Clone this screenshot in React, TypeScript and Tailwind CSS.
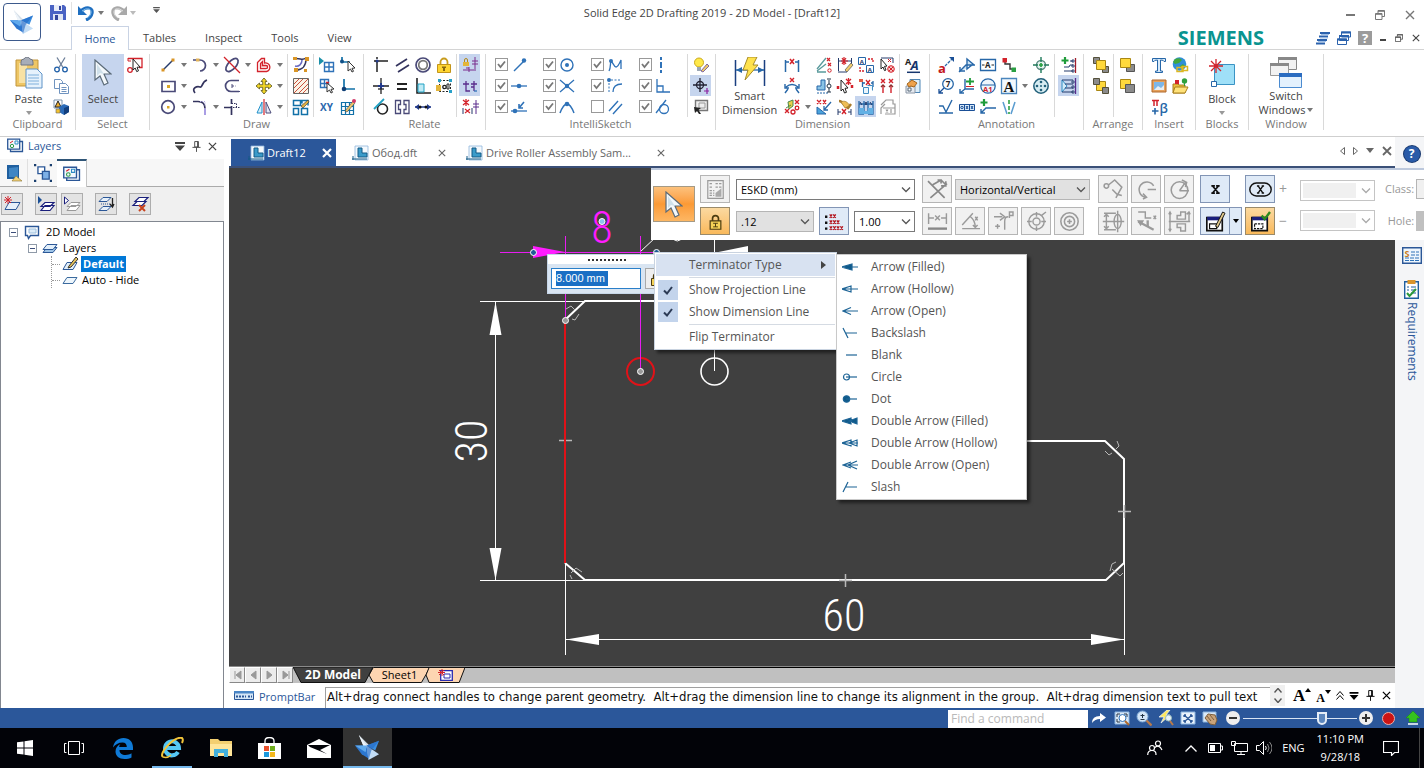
import type { ReactNode } from 'react'
import clsx from 'clsx'

const navy = '#243a6b'
const blue = '#2f72b8'
const red = '#d3222b'
const grey = '#9a9a9a'

const glyphs: Record<string, ReactNode> = {
  // clipboard / select
  cut: <g strokeWidth="1.3"><path d="M4 .5 10 10.5M12 .5 6 10.5" stroke="#6d7f99" /><circle cx="4" cy="12.5" r="2.3" stroke="#1f5fa8" /><circle cx="12" cy="12.5" r="2.3" stroke="#1f5fa8" /></g>,
  copy: <g fill="#fff" stroke="#6f93bf"><path d="M1.5 1.5h6l2 2v7h-8z" /><path d="M6.5 5.5h6l3 3v7h-9z" /><path d="M8.5 9.5h5M8.5 11.5h5M8.5 13.5h5" /></g>,
  format: <g><path d="M1 1h8v8H1z" fill="#fff" stroke="#7b93ad" /><path d="M2 8 5 2l3 6z" fill="#f0b030" stroke="#222" /><path d="m6 8 5-3 5 2v6l-5 3-5-3z" fill="#2b6bb8" /><path d="m11 9 5-2v6l-5 3z" fill="#123f7d" /><path d="M3 10h4v4H3z" fill="#f2c230" stroke="#666" strokeWidth=".6" /></g>,
  selectTools: <g><path d="M1 1.5h14v9h-3" stroke={red} strokeWidth="1.3" /><path d="M1 1v3h3" stroke={red} /><circle cx="3" cy="13" r="2.3" stroke={red} strokeWidth="1.3" /><path d="m6 2 7 8-3 .3 1.5 3.5-1.8.8L8.2 11 6 13z" fill="#fff" stroke="#222" /></g>,
  // draw
  line: <g><path d="M3 13 13 3" stroke={navy} strokeWidth="1.5" /><path d="M1.5 11.5h3v3h-3zM11.5 1.5h3v3h-3z" fill="#d99526" /></g>,
  arc: <g><path d="M1 3h7a5.5 5.5 0 0 1 0 11" stroke="#4a4a78" strokeWidth="1.7" /><path d="M4 1.5h3.5v3H4z" fill="#e2b45a" /></g>,
  ellipseTrim: <g><ellipse cx="8" cy="8" rx="8" ry="4" transform="rotate(-48 8 8)" stroke="#4a4a78" strokeWidth="1.7" /><path d="M0 0 16 16" stroke={red} strokeWidth="1.3" /></g>,
  offset: <g stroke={red} strokeWidth="1.3"><path d="M1.5 14.5v-9l4-4h3V6a4.3 4.3 0 1 1 2 8.5z" /><path d="M4.5 11.7V6.5l2-2v4H10a1.6 1.6 0 0 1 0 3.2z" fill="#f8d7d7" /></g>,
  rect: <g><path d="M2 3.5h13v10H2z" stroke="#4a4a78" strokeWidth="1.7" /><path d="M7 7h3v3H7z" fill="#d9a526" /></g>,
  curve: <path d="M3 15c-4-5 2-7 5-6s1-5 7-7" stroke="#34345e" strokeWidth="1.7" />,
  slot: <g stroke="#4a4a78" strokeWidth="1.7"><path d="M15 2.5H7a5.5 5.5 0 0 0 0 11h8" /><path d="M8 8h4" strokeDasharray="2 1.5" strokeWidth="1" /><path d="M12 13.5h4M8 6v4" strokeWidth="1" /></g>,
  move: <path d="m8 0 3 3.5H9.3v3.2h3.2V5L16 8l-3.5 3V9.3H9.3v3.2H11L8 16l-3-3.5h1.7V9.3H3.5V11L0 8l3.5-3v1.7h3.2V3.5H5z" fill="#f4d726" stroke="#55511c" strokeWidth=".8" />,
  circle: <g><circle cx="8" cy="8" r="6.3" stroke="#4a4a78" strokeWidth="1.7" /><path d="M7 7h2.5v2.5H7z" fill="#d9a526" /></g>,
  fillet: <g><path d="M1 2.5h5" stroke="#34345e" strokeWidth="1.5" /><path d="M6 2.5q7 0 7 7" stroke="#34345e" strokeWidth="1.7" /><path d="M13 9.5V16" stroke="#9a8ce0" strokeWidth="1.7" /><path d="M8 2.5h5v5" stroke="#b6afe6" strokeDasharray="1 1" /></g>,
  extend: <g stroke="#34345e" strokeWidth="1.7"><path d="M7.5 0v5M7.5 7v9M0 8.5h7" /><path d="M9 8.5h7M7.5 4.5h5v4" strokeWidth="1" strokeDasharray="1.5 1" /></g>,
  mirror: <g><path d="M1 14 6 3v11z" stroke="#1f8fc9" fill="#d8effa" /><path d="M15 14 10 3v11z" stroke="#4a4a78" fill="#e8e8f6" /><path d="M8 0v16" stroke={red} strokeWidth="1.2" /></g>,
  sketch: <g stroke="#34345e" strokeWidth="1.5"><path d="M2 1.5C8 1 9 4 13 1M3 13c6 0 10-4 10-11" /><path d="M2 9c4 1 7-2 7-6" stroke="#6a6ac0" /><path d="M0 0h4v3H0zM12 0h4v4h-4zM1 11h4v4H1zM11 12h3v3h-3z" fill="#d99526" stroke="none" /></g>,
  hatch: <g><path d="M.5.5h15v15H.5z" fill="#fbf3e6" stroke="#666" /><path d="M1 6 6 1M1 10l9-9M1 15 15 1M6 15l9-9M10 15l5-5" stroke="#c9503c" /></g>,
  fillTool: <g><path d="M.5 1.5h7v5h-7zM.5 9.5h5v6h-5zM8.5 9.5h6v6h-6zM9 4.5v-3h6v5" stroke="#1271a8" strokeWidth="1.5" /><path d="m8 7 7-6 1 2-6 6z" fill="#e0b040" stroke="#333" strokeWidth=".6" /></g>,
  gridSnap: <g><path d="m0 0 5 4-5 4z" fill="#1a8fa8" /><path d="M5.5 5.5h9v9h-9zM10 5.5v9M5.5 10h9" stroke={blue} strokeWidth="1.4" /></g>,
  gridPick: <g><path d="M1.5 1.5h8v8h-8zM5.5 1.5v8M1.5 5.5h8" stroke={blue} strokeWidth="1.4" /><path d="m8 5 7 6-3 .3 1.5 3-1.5.7-1.5-3L8 14z" fill="#fff" stroke="#333" /><path d="M7 4.5h3" stroke={red} strokeWidth="1.5" /></g>,
  xy: <text x="1" y="12" fontSize="10" fontWeight="700" fill="#2b67ad">XY</text>,
  nodePick: <g><path d="M2 0v5h8" stroke="#1271a8" strokeWidth="1.7" /><circle cx="2" cy="4.5" r="2" fill="#0f4f86" /><path d="m8 4 7 7-3 .3 1.5 3-1.5.7-1.5-3L8 14z" fill="#fff" stroke="#333" /></g>,
  nodeCorner: <g><path d="M4 1v10h11" stroke="#1271a8" strokeWidth="1.7" /><circle cx="4" cy="11" r="2.3" fill="#0f3f76" /></g>,
  gridEdit: <g><path d="M1.5 3.5h12v12h-12zM5.5 3.5v12M9.5 3.5v12M1.5 7.5h12M1.5 11.5h12" stroke="#1271a8" strokeWidth="1.2" /><path d="m5 12 8-10 2 2-8 9z" fill="#eec56b" stroke="#444" strokeWidth=".6" /><circle cx="14" cy="2" r="2" fill="#d33a6a" /></g>,
  // relate
  connect: <g stroke="#222" strokeWidth="1.5"><path d="M4 15V4h11" /><circle cx="4" cy="4" r="1.6" fill="#223a8b" stroke="none" /><path d="M1 4h2M4 0v2" /></g>,
  parallel: <path d="M2 9 13 2M4 15l11-7" stroke="#34345e" strokeWidth="1.7" />,
  concentric: <g stroke="#4a4a78" strokeWidth="1.7"><circle cx="8" cy="8" r="7" /><circle cx="8" cy="8" r="4.3" stroke="#777" /></g>,
  lock: <g><path d="M4.5 8V5a3.5 3.5 0 0 1 7 0v3" stroke="#c79b1c" strokeWidth="1.8" /><path d="M1.5 7.5h13v8h-13z" fill="#ffd530" stroke="#c2941a" /><path d="M6 9.5h4V11H9v3H7v-3H6z" fill="#8a6a10" /></g>,
  hv: <g stroke="#222" strokeWidth="1.3"><path d="M8 0v5M8 11v5M0 8h5M11 8h5" /><path d="M8 5v6M5 8h6" stroke="#223a8b" strokeWidth="2" /><path d="M5 11h6" /></g>,
  equal: <path d="M3 6h10M3 11h10" stroke="#222" strokeWidth="2.2" />,
  perp: <g><path d="M2 0v15h14" stroke="#222" strokeWidth="1.6" /><path d="M3 6h6v8H3z" fill="#bfeaf5" stroke="#22a2c4" /></g>,
  rigid: <g><path d="M3.5 2.5h11v11h-11z" stroke="#222" strokeDasharray="2 1.5" /><path d="M0 7h5v6H0z" fill="#e3b53a" /><circle cx="8.5" cy="9" r="1.7" stroke="#222" strokeWidth="1.3" /><path d="M11 6h2v5h-2z" stroke="#222" /><path d="M2 1h3v3H2zM13 1h3v3h-3zM13 12h3v3h-3z" fill="#28a0c8" /></g>,
  tangent: <g><circle cx="9.5" cy="10" r="5" stroke="#222" strokeWidth="1.6" /><path d="M1 10 11 0" stroke="#22a2c4" strokeWidth="1.8" /></g>,
  symmetric: <path d="M1.5 1.5h5v4h-2v5h2v4h-5zM15 1.5h-5v4h2v5h-2v4h5z" stroke="#4a4a78" strokeWidth="1.3" />,
  collinear: <g><path d="M0 8h16" stroke="#223a8b" strokeWidth="1.5" /><path d="M0 8 4 5v6zM16 8l-4-3v6z" fill="#223a8b" /><circle cx="5" cy="8" r="1.5" fill="#111" /><circle cx="11" cy="8" r="1.5" fill="#111" /></g>,
  maintain: <g><path d="M2.5 5V3a1.5 1.5 0 0 1 3 0v2" stroke="#b38a1c" /><path d="M1 5h6v4H1z" fill="#e3b53a" /><path d="M13 0v14M10 4h6M10 7h6M1 13h11M7 10v5M4 11h3" stroke="#7a2c8c" /></g>,
  handles: <g stroke="#5a2c8c" strokeWidth="1.3"><path d="M4 3v10h4M1 6h6M12 3v10M9 6h6M9 9h3" /><path d="M12 13h3" stroke="#2f72b8" /></g>,
  removeRel: <g><path d="M4 0v7M1 1l6 5M7 1 1 6" stroke={red} strokeWidth="1.3" /><path d="M14 1v14M11 5h6M11 8h6" stroke="#5a2c8c" /><path d="M1 9v6M10 9v6" stroke={navy} /><path d="m3 10 5 4M8 10l-5 4" stroke={red} strokeWidth="1.2" /></g>,
  // intellisketch
  endpoint: <g><path d="M3 14 13 4" stroke={blue} strokeWidth="1.5" /><circle cx="13" cy="3.5" r="2.2" fill={blue} /></g>,
  midpoint: <g><path d="M0 8h16" stroke={blue} strokeWidth="1.3" /><circle cx="8" cy="8" r="2.3" fill={blue} /></g>,
  pointOn: <g><path d="M0 12h16" stroke={blue} strokeWidth="1.3" /><circle cx="4" cy="12" r="2.3" fill={blue} /><path d="m8 9 5-6M8 5v4h4" stroke={blue} strokeWidth="1.6" /></g>,
  centre: <g><circle cx="8" cy="8" r="6" stroke={blue} strokeWidth="1.4" /><circle cx="8" cy="8" r="2" fill={blue} /></g>,
  intersect: <g><path d="M1 2 15 14M15 2 1 14" stroke={blue} strokeWidth="1.3" /><circle cx="8" cy="8" r="2.2" fill={blue} /></g>,
  silhouette: <g><path d="M1 14q7-18 14 0" stroke={blue} strokeWidth="1.5" /><circle cx="8" cy="5" r="2.3" fill={blue} /></g>,
  editPoint: <g><path d="M2 14c2-3 1-8 2-10 3 2 4 13 10-1v9" stroke={blue} strokeWidth="1.3" /><circle cx="4" cy="4" r="2" fill={blue} /></g>,
  extension: <g><path d="M6 14c0-5 3-8 9-8" stroke={blue} strokeWidth="1.3" /><path d="M2 14V2h12" stroke={blue} strokeDasharray="2 1.5" /><circle cx="2" cy="2" r="2" fill={blue} /></g>,
  parallelBlue: <path d="M2 12 11 2M6 15 15 5" stroke={blue} strokeWidth="1.4" />,
  vertical: <path d="M6 0v3M6 5v6M6 13v3" stroke={blue} strokeWidth="2" />,
  perpBlue: <path d="M2 1v13h13M2 8h6v6" stroke={blue} strokeWidth="1.3" />,
  tangentBlue: <g stroke={blue} strokeWidth="1.3"><circle cx="9" cy="10" r="4.5" /><path d="M1 14 11 1" /></g>,
  bulb: <g><circle cx="6" cy="5.5" r="4.5" fill="#ffe94a" stroke="#caa91c" /><path d="M4 10h4v4H4z" fill="#9aa6b5" /><path d="m8 14 6-7 2 2-6 6z" fill="#f0cb6b" stroke="#634a9c" strokeWidth=".8" /></g>,
  origin: <g><circle cx="7" cy="7" r="3.5" stroke="#223" strokeWidth="1.3" /><path d="M7 0v14M0 7h14" stroke="#223" strokeWidth="1.3" /><path d="M14 10v6M11 13h5" stroke="#8a22a0" strokeWidth="1.2" /></g>,
  boxPick: <g><path d="M2.5 1.5h12v10h-12z" fill="#eee" stroke="#777" strokeWidth="1.4" /><path d="M6 4h6v5H6z" stroke="#999" /><path d="m1 8 7 1-2.5 2L8 15H6l-2-3-2 2z" fill="#222" /></g>,
  // dimension
  dist: <g><path d="M1.5 3v12M14.5 3v12M2 5h3M11 5h3" stroke="#2767a8" strokeWidth="1.5" /><path d="m6 2 4 5M10 2 6 7" stroke={red} strokeWidth="1.5" /></g>,
  angle: <g><path d="M2 9q6-5 12 0M1 15l3-4M15 15l-3-4M1 6v4h4M15 6v4h-4" stroke="#2767a8" strokeWidth="1.4" /><path d="m6 0 4 4M10 0 6 4" stroke={red} strokeWidth="1.4" /></g>,
  coordDim: <g><path d="m4 3 5-2v6l-4 3zM2 9l5-3" fill="#e9cf4a" stroke="#4d8a4a" /><path d="m11 1 4 4M15 1l-4 4M1 10l4 4M5 10l-4 4" stroke={red} strokeWidth="1.3" /><circle cx="13" cy="9" r="1.8" stroke={red} strokeWidth="1.3" /><circle cx="9" cy="13" r="2" stroke={red} strokeWidth="1.3" /></g>,
  angCoord: <g><path d="M1 12 10 1M1 14l9-7M1 15h9" stroke="#5a9a9c" strokeWidth="1.3" /><path d="m11 1 3 3M14 1l-3 3M12 6l3 3M15 6l-3 3" stroke={red} strokeWidth="1.2" /><circle cx="13.5" cy="13.5" r="1.7" stroke={red} /></g>,
  symDia: <g><path d="M1 12V8h4V2h4v10z" fill="#8bc4e6" stroke="#2767a8" /><path d="M1 15h11" stroke="#2767a8" strokeDasharray="2 1" /><path d="M11 1h4M11 14h4M13 2v12" stroke="#234" /><circle cx="13" cy="8" r="2" fill="#fff" stroke="#234" /></g>,
  chamfer: <g><path d="M1 8v7h9z" fill="#4aa3dc" stroke="#2767a8" /><path d="m1 1 4 4M5 1 1 5M7 1l3 4M10 1 7 5" stroke={red} strokeWidth="1.3" /><path d="M15 3 8 11M8 7v4h4" stroke="#2767a8" strokeWidth="1.3" /></g>,
  dimEdit: <g><path d="M1.5 1v13M14.5 1v7M2 4h12" stroke={navy} /><path d="M1 15h9" stroke={navy} /><path d="M5 1 9 7M9 1 5 7M7 0v8M4 4h7" stroke={red} strokeWidth="1.2" /><path d="m8 13 6-7 2 2-6 7z" fill="#f0cb6b" stroke="#555" strokeWidth=".7" /></g>,
  dimPick: <g><path d="M1 8v3M15 7v3" stroke={red} strokeWidth="2.5" /><path d="m4 2 7 8-3 .3 1.5 4-2 .7L6 11l-2 2z" fill="#fff" stroke="#222" /><path d="m9 1 5 5M14 1 9 6M11.5 0v7" stroke={red} strokeWidth="1.3" /></g>,
  dimPaint: <g><path d="M2 2c4 0 6 6 9 7l3-4" stroke="#a97b2c" strokeWidth="2.5" /><path d="M4 3c3-2 8 0 8 4L8 9z" fill="#eebd55" stroke="#9b7425" strokeWidth=".6" /><path d="m5 10 4 5M9 10l-4 5" stroke={red} strokeWidth="1.4" /><path d="M1 10v6M14 10v6M1 13h3M11 13h3" stroke={navy} /></g>,
  attach: <g><path d="M.5.5h7v7h-7zM8.5 8.5h7v7h-7z" fill="#fff" stroke="#2767a8" /><path d="M10 2h5v4M2 10v4h4" stroke={red} strokeDasharray="2 1" strokeWidth="1.3" /><text x="1.8" y="6.5" fontSize="6" fontWeight="700" fill={navy}>A</text><text x="9.8" y="14.5" fontSize="6" fontWeight="700" fill={navy}>A</text></g>,
  copyDim: <g><path d="M1 1h4v3H1z" fill="#e05c44" /><path d="M4.5 4v5M15 3v6M5 5h2M13 5h2" stroke="#2767a8" strokeWidth="1.3" /><path d="m8 2 4 5M12 2 8 7" stroke={red} strokeWidth="1.3" /><path d="M5.5 9.5h5v6h-5zM9.5 7.5h5v5" stroke="#3f8cc4" fill="#eaf5fc" /></g>,
  arrange: <g><path d="M1 2v13h5M15 2v13h-5M6 2v13M10 2v13M1 5h14" stroke="#2767a8" strokeWidth="1.3" /><path d="M1 9h5v6H1zM10 9h5v6h-5zM6 12h4v3H6z" fill="#62b0e4" /><path d="m7 3 2 3M9 3 7 6M2 3l2 3M12 3l2 3" stroke={navy} /></g>,
  trackDim: <g><path d="M2 1h12v5" stroke={navy} /><path d="m2 2 6 7-2.5.3L7 13l-1.5.6L4 10l-2 2z" fill="#fff" stroke="#222" /><circle cx="12" cy="12" r="3.3" stroke={red} fill="#f6c8c8" /><path d="m10 10 4 4M14 10l-4 4M9 2l3 3M12 2 9 5" stroke={red} /></g>,
  alignDim: <g stroke={red} strokeWidth="1.4"><path d="m2 1 4 4M6 1 2 5M10 1l4 4M14 1l-4 4M4 7v8M12 7v8" /><path d="m2 9 2-2 2 2M10 9l2-2 2 2" stroke="#8a3030" /></g>,
  retrieve: <g stroke={grey} strokeWidth="1.2"><path d="M2 6 7 1h7v4h2v4M6 5 2 9v6M4 9h12v6H6M7 10.5l2 3M9 10.5l-2 3M12 10v4" /></g>,
  styles: <g><text x="0" y="8" fontSize="9" fontWeight="700" fill="#222">A</text><text x="5.5" y="13" fontSize="13" fontWeight="700" fontStyle="italic" fill="#16366e">A</text><path d="M2 15.3h13" stroke="#16366e" strokeWidth="1.5" /></g>,
  props: <g><path d="M5 1.5h10v13H5z" fill="#dceefa" stroke="#4f86b5" /><path d="M1 8h9v7H1z" fill="#e5e9f0" stroke="#8a96a5" /><path d="m2 6 5-4 5 3-3 4-3-1-2 1z" fill="#eea24c" stroke="#a4651c" /><path d="M3 10h3v3H3z" fill="#fff" stroke="#567" /></g>,
  // annotation
  leader: <g><path d="M7 9 15 1" stroke="#2767a8" strokeWidth="1.3" strokeDasharray="3 1" /><path d="M11 0h5v5z" fill="#1a4f96" /><text x="0" y="15.5" fontSize="13" fontWeight="700" fill="#c4161c">a</text></g>,
  datumTarget: <g stroke="#2767a8" strokeWidth="1.4"><path d="M0 15 7 8h9M8 2v10l6-5z" fill="#cfe5f6" /><path d="M1 10v4h5" /></g>,
  datum: <g><path d="M.5 2.5h15v11H.5z" stroke="#2767a8" strokeWidth="1.3" /><text x="5" y="11" fontSize="8" fontWeight="700" fill="#222">A</text><path d="M2 8h2.5M11.5 8H14" stroke="#222" /></g>,
  connector: <g><path d="M4 3v4h5v5h4" stroke="#333" strokeWidth="1.4" /><path d="M1.5 1H6v4.5H1.5z" fill={red} /><path d="M10.5 10.5H15V15h-4.5z" fill="#2aa043" /></g>,
  balloon: <g><circle cx="10" cy="6" r="5.3" stroke="#2767a8" strokeWidth="1.3" /><text x="7.8" y="9" fontSize="8" fontWeight="700" fill="#222">7</text><path d="M6 10 1 15M1 11v4h4" stroke="#1a4f96" strokeWidth="1.3" /></g>,
  surface: <g><path d="M6 1v10h9M6 11l-5 4M1 11v4h4" stroke="#2767a8" strokeWidth="1.4" /><path d="M11 0v7M7 3.5h8" stroke="#1f9c3a" strokeWidth="1.8" /><path d="M7 8.5h8" stroke={red} /></g>,
  a1: <g><circle cx="8" cy="8" r="7.2" stroke="#2767a8" strokeWidth="1.3" fill="#eef6fc" /><path d="M1 7h14" stroke="#2767a8" /><text x="3" y="14" fontSize="7.5" fontWeight="700" fill={red}>A1</text></g>,
  textA: <g><path d="M.5.5h15v15H.5z" stroke="#4b86bd" strokeWidth="1.3" fill="#f3f9fe" /><text x="2.5" y="13.5" fontSize="15" fontWeight="700" fill="#111" fontFamily="Liberation Serif, serif">A</text></g>,
  rough: <path d="M1 7h4l3 6 6-12M1 14h14" stroke="#2767a8" strokeWidth="1.4" />,
  fcf: <g><path d="M.5 5.5h15v6H.5zM5.5 5.5v6M10.5 5.5v6" stroke="#1a4f96" fill="#d7e8f7" /><circle cx="3" cy="8.5" r="1.2" stroke="#1a4f96" /><path d="m7 7 2 3M9 7l-2 3M12 7l2 3M14 7l-2 3" stroke="#1a4f96" /></g>,
  weld: <g><path d="M1 14 6 9h10M1 10v4h4" stroke="#2767a8" strokeWidth="1.4" /><path d="M4 0v7M.5 3.5h7" stroke="#1f9c3a" strokeWidth="2.2" /></g>,
  taper: <g strokeWidth="1.5"><path d="M2 3 6 15M14 3l-4 12" stroke="#5a9cd0" /><path d="M8 1v14" stroke="#1f9c3a" strokeDasharray="4 2" /></g>,
  centreMark: <g><circle cx="8" cy="8" r="4.5" stroke="#5b8a80" strokeWidth="1.4" fill="#e3f3ef" /><path d="M8 0v5M8 11v5M0 8h5M11 8h5" stroke="#1f7a5a" strokeWidth="1.4" /><path d="M8 6v4M6 8h4" stroke="#2aa043" strokeWidth="1.7" /></g>,
  boltCircle: <g><circle cx="8" cy="8" r="7.2" stroke="#22607a" strokeWidth="1.5" fill="#d6ecf2" /><circle cx="8" cy="4" r="1.3" fill="#22607a" /><circle cx="8" cy="12" r="1.3" fill="#22607a" /><circle cx="4" cy="8" r="1.3" fill="#22607a" /><circle cx="12" cy="8" r="1.3" fill="#22607a" /><circle cx="8" cy="8" r="1" fill="#22607a" /></g>,
  addNode: <g><path d="M4 0v7M.5 3.5h7" stroke="#1f9c3a" strokeWidth="2.2" /><path d="M14.5 1v15" stroke="#a01c2c" strokeWidth="1.3" /><path d="M3 10h5l1-2h3M3 14h9M9 4h3" stroke={navy} /><circle cx="12" cy="4" r="1.2" stroke={navy} /><circle cx="12" cy="9" r="1.2" stroke={navy} /><circle cx="12" cy="14" r="1.2" stroke={navy} /></g>,
  treeNode: <g><path d="M1 2v12l5-6z" stroke="#2f8cc4" fill="#d3ebf8" /><path d="M14.5 0v16" stroke="#5a2c8c" strokeWidth="1.3" /><path d="M1 2h11M4 6h8M4 10h8M1 14h11" stroke={navy} /><circle cx="12" cy="4" r="1.2" stroke={navy} /><circle cx="12" cy="9" r="1.2" stroke={navy} /><circle cx="12" cy="14" r="1.2" stroke={navy} /></g>,
  // arrange / insert
  toFront: <g stroke="#55503a"><path d="M.5.5h6v6h-6zM9.5 9.5h6v6h-6z" fill="#8b8b8b" /><path d="M3.5 3.5h9v9h-9z" fill="#ffd93c" stroke="#a98714" /></g>,
  toBack: <g stroke="#55503a"><path d="M3.5 3.5h9v9h-9z" fill="#ffd93c" stroke="#a98714" /><path d="M.5.5h6v6h-6zM9.5 9.5h6v6h-6z" fill="#8b8b8b" /></g>,
  forward: <g><path d="M7.5 7.5h8v7h-8z" fill="#8b8b8b" stroke="#555" /><path d="M1.5 1.5h10v9h-10z" fill="#ffd93c" stroke="#a98714" /></g>,
  backward: <g><path d="M1.5 1.5h10v9h-10z" fill="#ffd93c" stroke="#a98714" /><path d="M6.5 6.5h9v8h-9z" fill="#8b8b8b" stroke="#555" /></g>,
  textT: <path d="M1.5 4.5v-3h13v3H13Q13 3 9.5 3v11h2v1.5h-7V14h2V3Q3 3 3 4.5z" fill="#d7eafa" stroke="#2767a8" />,
  globe: <g><circle cx="7.5" cy="7" r="6.8" fill="#2f8fd8" /><path d="M3 2q5-2 7 1l-3 3-4 1-2-2zM8 9l3-2 2 2-3 4z" fill="#42a83c" /><path d="M5 10.5h6v4H5zM10 9.5h5.5v4H10z" fill="none" stroke="#dcb722" strokeWidth="1.5" /></g>,
  image: <g><path d="M1 2h14v12H1z" fill="#e6a15c" stroke="#b0682c" /><path d="M3 4h10v8H3z" fill="#7db6e8" /><path d="m3 12 4-4 3 2 3-3v5z" fill="#e9eef2" /></g>,
  folder: <g><path d="M1 6h5l1 1h6v8H1z" fill="#eebe3c" stroke="#a9801c" /><path d="M3 9h13l-3 6H1z" fill="#ffe27a" stroke="#a9801c" /><path d="M3 2h4v4H3z" fill={red} /><circle cx="12.5" cy="3" r="2.7" fill="#2fa03c" /><path d="M12.5 5v3" stroke="#2fa03c" /></g>,
  symbols: <g><path d="M1 1.5h7M3 2v5M6 2v5" stroke={red} strokeWidth="1.5" /><path d="M4 9v6.5M1 12h6.5" stroke="#2767a8" strokeWidth="1.6" /><text x="8.5" y="13.5" fontSize="13" fontWeight="600" fill="#2767a8">β</text></g>,
  // command bar
  styleGrid: <g stroke="#9a9a9a"><path d="M1.5.5h13v15h-13z" fill="#f2f2f2" /><path d="M3 3h3M8 3h5M3 6h3M8 6h5M3 9h4M3 11h4M3 13h4" strokeDasharray="2 1" /><path d="M8 14v-3l5-4v7z" fill="#aaa" stroke="none" /></g>,
  lockSmall: <g><path d="M5.5 8V5.5a2.5 2.5 0 0 1 5 0V8" stroke="#4a3b10" strokeWidth="1.4" /><path d="M3.5 7.5h9v7h-9z" fill="#f4d257" stroke="#4a3b10" /><path d="M8 9.5v3M6 9.5h4M6 12.5h4" stroke="#4a3b10" strokeWidth=".8" /></g>,
  decimals: <g><path d="M0 3h2v2H0zM0 8h2v2H0zM0 13h2v2H0z" fill="#111" /><path d="m4 2 2 3M6 2 4 5M7 2l2 3M9 2 7 5M4 7l2 3M6 7l-2 3M7 7l2 3M9 7l-2 3M10 7l2 3M12 7l-2 3M4 12l2 3M6 12l-2 3M7 12l2 3M9 12l-2 3M10 12l2 3M12 12l-2 3M13 12l2 3M15 12l-2 3" stroke="#b2121c" strokeWidth="1.1" /></g>,
  crossDim: <g stroke="#888" strokeWidth="1.4"><path d="M0 1 14 15M16 3 2 15M4 4l7-4M11 0l4 4M8 0h3v3M15 1v4h-4" /></g>,
  gDist: <g stroke={grey} strokeWidth="1.2"><path d="M.5 1v9M15.5 1v9M1 5h4M11 5h4M6 3l4 4M10 3 6 7" /><path d="M0 14h16" strokeWidth="2" stroke="#888" /></g>,
  gAngle: <g stroke={grey} strokeWidth="1.2"><path d="M1 14h15M1 11 10 1M8 4q4 3 4 9M10 11l2 2 2-2M12 4l2 3M14 4l-2 3" /></g>,
  gLeader: <g stroke={grey} strokeWidth="1.2"><path d="M0 4h7M9 15V8q0-4 3-4M5 1l4 3-4 3M1 12h4M3 10v4M13 5V0h3v3h-3" /></g>,
  gCircle: <g stroke={grey} strokeWidth="1.2"><circle cx="8" cy="8" r="6.5" /><circle cx="8" cy="8" r="3" /><path d="M8 0v4M8 12v4M0 8h4M12 8h4M12 3l4-3" /></g>,
  gTarget: <g stroke={grey} strokeWidth="1.3"><circle cx="8" cy="8" r="7.3" /><circle cx="8" cy="8" r="4.3" /><path d="M8 6v4M6 8h4" /></g>,
  gNode: <g stroke={grey} strokeWidth="1.3"><circle cx="2" cy="5" r="1.9" /><path d="m4 4 5-4 6 6-5 9M7 8l4 4 4 1" /></g>,
  gArc: <path d="M16 8H9M14 5a6.5 6.5 0 1 0-7 9.500M5 11.500l3 3-3 1.500" stroke={grey} strokeWidth="1.3" />,
  gArc2: <g stroke={grey} strokeWidth="1.3"><circle cx="8" cy="8.5" r="7" /><path d="M8 9h8M8 9l5-7M10 0l4 2-1 4" /></g>,
  gSym: <g stroke={grey} strokeWidth="1.2"><ellipse cx="11.5" cy="8" rx="3" ry="6" /><path d="M0 1h10M0 15h10M2 2v12M-1 8h18M11.5-1v18M0 4l2-2 2 2M0 12l2 2 2-2" /></g>,
  gJog: <g stroke={grey} strokeWidth="1.2"><path d="M1 0h6v5h5M14 3l2 3M16 3l-2 3" /><path d="m1 8 13 7" strokeWidth="1.8" /><path d="M0 7h6l-3 5z" fill="#999" stroke="none" /><path d="M9 7v5" strokeWidth="2" /></g>,
  gHalf: <g stroke={grey} strokeWidth="1.2"><path d="M0 0v16M16 0v8M-1 8h18M6 6V3h3V0h4v6zM6 10v3h3v3h4v-6zM-1 2l1-2 1 2M-1 14l1 2 1-2M14 2l2-2 1 2" /></g>,
  xGlyph: <path d="m5.5 5 5 6M10.5 5l-5 6M4.5 5h3M4.500 11h3M8.500 5h3M8.500 11h3" stroke="#111" strokeWidth="1.4" />,
  xRound: <g stroke="#111" strokeWidth="1.2"><rect x="-1" y="2.5" width="18" height="11" rx="5.5" /><path d="m6 5 4 6M10 5l-4 6M5 5h2M9 5h2M5 11h2M9 11h2" /></g>,
  dlgEdit: <g><path d="M.7 4.7h13v11H.7z" fill="#fff" stroke="#111" strokeWidth="1.4" /><path d="M1 4h13v3H1z" fill="#1a1f7c" /><path d="M3 10h6v4H3z" stroke="#111" /><path d="m8 12 6-12 2 1-6 12z" fill="#e2c98a" stroke="#111" strokeWidth=".8" /></g>,
  dlgCheck: <g><path d="M.7 4.7h13v11H.7z" fill="#fff" stroke="#111" strokeWidth="1.4" /><path d="M1 4h13v3H1z" fill="#1a1f7c" /><path d="M3 10h7v4H3z" stroke="#111" strokeDasharray="2 .8" /><path d="m9 3 2.5 3L16 0" stroke="#2c8a1e" strokeWidth="2" /></g>,
  // layers pane
  layersPane: <g><path d="M3.5 3.5h12v10h-12z" fill="#fff" stroke="#2b5797" strokeWidth="1.3" /><path d="M.7 1.2h12v10H.7z" fill="#f2f8fd" stroke="#2b5797" strokeWidth="1.3" /><path d="m3 5 3-2" stroke={red} /><circle cx="5" cy="8" r="1.7" stroke="#2e9a4a" /><path d="M8 3h3v3H8z" stroke="#2f8cc4" /></g>,
  library: <g><path d="M1 0h12v14H1z" fill="#1f5f9f" /><path d="m3 3 9-1v10H3z" fill="#3f86c4" /><path d="m6 16 4-5 6 5z" fill="#f3d27a" stroke="#8c7430" strokeWidth=".6" /></g>,
  groups: <g><path d="M0 0h2v2H0zM14 0h2v2h-2zM0 14h2v2H0zM14 14h2v2h-2z" fill="#1a3f6e" /><path d="M3.5 2.5h6v6h-6z" fill="#fff" stroke="#2b5797" strokeWidth="1.2" /><path d="M7.5 6.5h6v7h-6z" fill="#7db0e6" stroke="#2b5797" strokeWidth="1.2" /></g>,
  newLayer: <g><path d="M5 6.5h11l-4 7H1z" fill="#e6f0fa" stroke="#2b5797" /><path d="M4 0v8M0 4h8M1 1l6 6M7 1 1 7" stroke={red} /></g>,
  showLayer: <g><path d="m0 0 4 4-4 4z" fill="#1a4f96" /><path d="M7 9.5h9l-4 5H3zM7 6.5h9l-4 4H3z" fill="#fff" stroke="#1a1f7c" strokeWidth="1.2" /></g>,
  hideLayer: <g><path d="m.5 1 4 3.5-4 3.5z" fill="#fff" stroke="#1a1f7c" /><path d="M7 9.5h9l-4 5H3zM7 6.5h9l-4 4H3z" fill="#fff" stroke="#999" /></g>,
  moveLayer: <g><path d="M5 1.5h8l-4 4H1zM5 10.5h8l-4 4H1z" fill="#e6f0fa" stroke="#2b5797" /><path d="M14.5 2v9M12 8l2.5 3L16 8" stroke="#222" strokeWidth="1.3" /><path d="M3 8h9" stroke="#2b5797" strokeDasharray="1 1" /></g>,
  delLayer: <g><path d="M7 1.5h9l-4 4H3zM5 5.5h9l-4 4H1z" fill="#fff" stroke="#1a1f7c" strokeWidth="1.2" /><path d="m7 9 6 6M13 9l-6 6" stroke="#c8431e" strokeWidth="2" /></g>,
  model: <g><path d="M1.5 2.5h13v9h-8l-2 3-1-3h-2z" fill="#fff" stroke="#2b5797" strokeWidth="1.4" /><path d="M5 5h7v4H5z" fill="#dcecf8" stroke="#9dbfdd" /></g>,
  layerStack: <g><path d="M5 7.5h10l-4 5H1z" fill="#9fc4e6" stroke="#2b5797" /><path d="M5 4.5h10l-4 5H1z" fill="#e2effa" stroke="#2b5797" /></g>,
  layerEdit: <g><path d="M5 6.5h10l-4 7H1z" fill="#e2effa" stroke="#2b5797" /><path d="m7 10 7-9 2 2-7 8-3 1z" fill="#e6c35a" stroke="#333" /></g>,
  layer: <path d="M5 5.5h10l-4 6H1z" fill="#eef6fc" stroke="#3a6a9e" />,
  docIcon: <g><path d="M3 1h13v14H3z" fill="#f4f9fd" stroke="#8fb6dc" strokeWidth=".8" /><path d="M6 3h4v5h5v4H6z" fill="#3b9bc9" stroke="#155a86" /><path d="M1 11v4M0 14h15" stroke="#155a86" /></g>,
}

function Glyph({ n, className = 'size-4' }: { n: string; className?: string }) {
  return (
    <svg viewBox="0 0 16 16" fill="none" className={clsx('shrink-0 overflow-visible', className)} aria-hidden="true">
      {glyphs[n]}
    </svg>
  )
}

function Caret({ className = 'fill-[#777]' }: { className?: string }) {
  return (
    <svg viewBox="0 0 6 4" className={clsx('h-1 w-[6px] shrink-0', className)} aria-hidden="true">
      <path d="M0 0h6L3 4z" />
    </svg>
  )
}

function Tool({ n, on }: { n: string; on?: boolean }) {
  if (!n) return <div className="size-[21px]" />
  return (
    <button type="button" aria-label={n} className={clsx('flex size-[21px] items-center justify-center', on && 'bg-[#c6d5ee]')}>
      <Glyph n={n} />
    </button>
  )
}

// One column of up to three small tools, with an optional column of drop-down carets
function Tools({ items, carets, on = [] }: { items: string[]; carets?: number[]; on?: number[] }) {
  return (
    <div className="flex">
      <div className="flex flex-col">
        {items.map((n, i) => (
          <Tool key={i} n={n} on={on.includes(i)} />
        ))}
      </div>
      {carets && (
        <div className="flex w-[11px] flex-col">
          {items.map((n, i) => (
            <div key={i} className="flex h-[21px] items-center justify-center">
              {carets.includes(i) && <Caret />}
            </div>
          ))}
        </div>
      )}
    </div>
  )
}

function Divider({ className = 'mx-[2px]' }: { className?: string }) {
  return <div className={clsx('h-[63px] w-px bg-[#d9d9d9]', className)} />
}

function Group({ label, className, children }: { label: string; className?: string; children: ReactNode }) {
  return (
    <section className="flex h-[76px] flex-col border-r border-[#d9d9d9]">
      <div className={clsx('flex h-[63px]', className)}>{children}</div>
      <h2 className="text-center leading-[13px] text-[#777]">{label}</h2>
    </section>
  )
}

function BigTool({ icon, label, caret, className }: { icon: ReactNode; label: string; caret?: boolean; className?: string }) {
  return (
    <button type="button" className={clsx('flex h-[63px] flex-col items-center text-[#444]', className)}>
      <span className="flex h-[37px] items-center justify-center">{icon}</span>
      <span className="leading-4">{label}</span>
      {caret && <Caret className="mt-1 fill-[#999]" />}
    </button>
  )
}

function Cursor({ className }: { className: string }) {
  return (
    <svg viewBox="0 0 18 27" className={className} aria-hidden="true">
      <path d="M1 1v20l5-4 4 9 4-2-4-9h7z" fill="#f3f8fb" stroke="#5b6b78" strokeWidth="1.2" />
      <path d="M3 5v12l3-3 4 1z" fill="#cfe0ea" />
    </svg>
  )
}

function Star({ className }: { className: string }) {
  return (
    <svg viewBox="0 0 26 26" className={className} aria-hidden="true">
      <path d="M4 0 15 11 10 14z" fill="#d4dde6" />
      <path d="M25 6 12 11 21 16z" fill="#3c8fe0" />
      <path d="M0 11h12l3 14-8-5z" fill="#2c76cf" />
      <path d="m12 11 13 9-11 6z" fill="#c3ddf5" />
      <path d="M4 0 12 11 11 17z" fill="#eef4fa" />
      <path d="M0 11h12l-1 7z" fill="#5fa9ec" />
      <path d="m25 6-8 10-3 10-2-15z" fill="#2268c4" opacity=".6" />
    </svg>
  )
}

function RestoreIcon({ className }: { className: string }) {
  return (
    <svg viewBox="0 0 10 10" fill="none" className={className} aria-hidden="true">
      <path d="M3 3V.5h6.5v6H7M.5 3.5H7v6H.5z" stroke="currentColor" />
      <path d="M.5 4.3H7M3 1.3h6.5" stroke="currentColor" />
    </svg>
  )
}

function CrossIcon({ className, weight = 1.4 }: { className: string; weight?: number }) {
  return (
    <svg viewBox="0 0 10 10" fill="none" className={className} aria-hidden="true">
      <path d="m1 1 8 8M9 1 1 9" stroke="currentColor" strokeWidth={weight} />
    </svg>
  )
}

function PinIcon({ className }: { className: string }) {
  return (
    <svg viewBox="0 0 10 12" fill="none" className={className} aria-hidden="true">
      <path d="M3 .5h4v6H3zM.5 7h9M5 7v5" stroke="currentColor" />
      <path d="M6.5.5v6" stroke="currentColor" strokeWidth="1.5" />
    </svg>
  )
}

function ShadeIcon({ className }: { className: string }) {
  return (
    <svg viewBox="0 0 10 9" className={className} fill="currentColor" aria-hidden="true">
      <path d="M0 0h10v2H0zM0 3.5h10L5 9z" />
    </svg>
  )
}

function TitleBar() {
  return (
    <header className="flex h-[50px] shrink-0 bg-white">
      <div className="flex w-[71px] shrink-0 gap-[9px] border-b border-[#d4d4d4] pl-[3px] pt-[3px]">
        <button type="button" aria-label="Application menu" className="flex size-[38px] items-center justify-center rounded-[4px] border border-[#3d5a8c]">
          <Star className="size-6" />
        </button>
        <button type="button" aria-label="Save" className="h-[18px] w-4">
          <svg viewBox="0 0 16 16" className="size-4">
            <path d="M0 1h14l2 2v13H0z" fill="#4a63c4" />
            <path d="M4 1h8v6H4z" fill="#e9edf9" />
            <path d="M3 10h10v6H3z" fill="#dfe5f4" />
            <path d="M9 2h2v4H9zM5 11h3v5H5z" fill="#33459c" />
          </svg>
        </button>
      </div>
      <div className="flex min-w-0 flex-1 flex-col">
        <div className="flex h-[26px] items-center">
          <div className="flex grow basis-0 items-center">
            <span className="h-[22px] w-px self-start bg-[#e2e2e2]" />
            <button type="button" aria-label="Undo" className="ml-[6px]">
              <svg viewBox="0 0 17 16" className="h-4 w-[17px]" fill="none">
                <path d="M3 6q4-4 8-3c5 1 4 9-3 12" stroke="#1f6fc0" strokeWidth="3.2" />
                <path d="M0 1v9h9z" fill="#1f6fc0" />
                <path d="M4 6q4-3 7-2c3 1 3 6-2 9" stroke="#8cc6f2" />
              </svg>
            </button>
            <Caret className="ml-[3px] fill-[#777]" />
            <button type="button" aria-label="Redo" className="ml-[6px]">
              <svg viewBox="0 0 17 16" className="h-4 w-[17px]" fill="none">
                <path d="M14 6Q10 2 6 3c-5 1-4 9 3 12" stroke="#a9a9a9" strokeWidth="3.2" />
                <path d="M17 1v9H8z" fill="#a9a9a9" />
                <path d="M13 6Q9 3 6 4c-3 1-3 6 2 9" stroke="#e3e3e3" />
              </svg>
            </button>
            <Caret className="ml-[3px] fill-[#bbb]" />
            <ShadeIcon className="mb-[6px] ml-[17px] h-[6px] w-[7px] text-[#555]" />
          </div>
          <h1 className="text-[#444]">Solid Edge 2D Drafting 2019 - 2D Model - [Draft12]</h1>
          <div className="flex grow basis-[71px] items-center justify-end gap-[20px] pr-[9px] pt-1 text-[#777]">
            <button type="button" aria-label="Minimize" className="h-[2px] w-[9px] bg-[#777]" />
            <button type="button" aria-label="Restore"><RestoreIcon className="size-[10px]" /></button>
            <button type="button" aria-label="Close"><CrossIcon className="size-[10px]" /></button>
          </div>
        </div>
        <nav className="flex h-[24px] items-center text-[#444]">
          <a href="#home" className="flex h-full w-[58px] items-center justify-center border-x border-t border-[#c9d3e4] bg-white text-[#2b579a]">Home</a>
          <div className="flex h-full flex-1 items-center gap-[29px] border-b border-[#d4d4d4] pl-[14px]">
            <a href="#tables">Tables</a>
            <a href="#inspect">Inspect</a>
            <a href="#tools">Tools</a>
            <a href="#view">View</a>
            <div className="ml-auto flex items-center pr-1">
              <span className="mr-[52px] text-[20px] font-bold leading-5 text-[#0a9490]">SIEMENS</span>
              <button type="button" aria-label="Cascade" className="mr-[7px]">
                <svg viewBox="0 0 14 14" className="size-[14px]" fill="none">
                  <path d="M4 2h10M3 5.5h9M1 9h10M0 12.5h9" stroke="#2b62ad" strokeWidth="2" />
                  <path d="M5 3.5h8M4 7h8M2 10.5h8" stroke="#9fbfe6" />
                </svg>
              </button>
              <button type="button" aria-label="Tile" className="mr-[7px]">
                <svg viewBox="0 0 14 14" className="size-[14px]" fill="#fff">
                  <path d="M4.5 1h9v5h-9zM2.5 4.5h9v5h-9zM.5 8h9v5.5h-9z" stroke="#2b62ad" />
                  <path d="M4 1.5h10M2 5h10M0 8.5h10" stroke="#2b62ad" strokeWidth="2" />
                </svg>
              </button>
              <button type="button" aria-label="Help" className="mr-[8px] size-[14px] bg-[#9b9b9b] text-[13px] font-bold leading-[14px] text-white">?</button>
              <button type="button" aria-label="Minimize document" className="mr-[9px] mt-1 h-[2px] w-[6px] bg-[#444]" />
              <button type="button" aria-label="Restore document" className="mr-[9px]"><RestoreIcon className="size-2" /></button>
              <button type="button" aria-label="Close document"><CrossIcon className="size-2" /></button>
            </div>
          </div>
        </nav>
      </div>
    </header>
  )
}

const sketchRelations = [
  ['endpoint', 'midpoint', 'pointOn'],
  ['centre', 'intersect', 'silhouette'],
  ['editPoint', 'extension', 'parallelBlue'],
  ['vertical', 'perpBlue', 'tangentBlue'],
]

function CheckBox({ label, checked }: { label: string; checked: boolean }) {
  return (
    <span className="relative flex size-[13px]">
      <input type="checkbox" aria-label={label} defaultChecked={checked} className="peer size-[13px] appearance-none border border-[#999] bg-white" />
      <svg viewBox="0 0 13 13" fill="none" className="pointer-events-none absolute inset-0 hidden size-[13px] peer-checked:block">
        <path d="m3 6 2.5 3L10 3.5" stroke="#777" strokeWidth="1.8" />
      </svg>
    </span>
  )
}

function Ribbon() {
  return (
    <div className="flex h-[87px] shrink-0 overflow-hidden border-b border-[#cfcfcf] bg-white pt-1">
      <Group label="Clipboard" className="pl-[7px] pr-[4px]">
        <BigTool
          label="Paste"
          caret
          className="w-[43px]"
          icon={
            <svg viewBox="0 0 28 32" className="h-8 w-7">
              <path d="M1 3h22v26H1z" fill="#eec665" stroke="#c2953a" />
              <path d="M4 6h8v20H4z" fill="#f8e2a4" />
              <path d="M6 5q0-3 3-3 1-2 3-2t3 2q3 0 3 3v3H6z" fill="#a7adb8" stroke="#707785" />
              <path d="M11 12h11l5 5v14H11z" fill="#e6f2fc" stroke="#5e93c8" />
              <path d="M13 18h11M13 21h11M13 24h11M13 27h11" stroke="#7fb0dc" />
            </svg>
          }
        />
        <Tools items={['cut', 'copy', 'format']} />
      </Group>
      <Group label="Select" className="pl-[6px] pr-[4px]">
        <BigTool label="Select" className="w-[42px] bg-[#c6d5ee]" icon={<Cursor className="h-[27px] w-[18px]" />} />
        <Tools items={['selectTools']} />
      </Group>
      <Group label="Draw" className="pl-[7px] pr-[5px]">
        <Tools items={['line', 'rect', 'circle']} carets={[0, 1, 2]} />
        <Tools items={['arc', 'curve', 'fillet']} carets={[0, 2]} />
        <Tools items={['ellipseTrim', 'slot', 'extend']} carets={[0]} />
        <Tools items={['offset', 'move', 'mirror']} carets={[0, 1, 2]} />
        <Divider />
        <Tools items={['sketch', 'hatch', 'fillTool']} />
        <Divider />
        <Tools items={['gridSnap', 'gridPick', 'xy']} />
        <Tools items={['nodePick', 'nodeCorner', 'gridEdit']} />
      </Group>
      <Group label="Relate" className="pl-[6px] pr-[5px]">
        <Tools items={['connect', 'hv', 'tangent']} />
        <Tools items={['parallel', 'equal', 'symmetric']} />
        <Tools items={['concentric', 'perp', 'collinear']} />
        <Tools items={['lock', 'rigid', '']} />
        <Divider />
        <Tools items={['maintain', 'handles', 'removeRel']} on={[0, 1]} />
      </Group>
      <Group label="IntelliSketch" className="pl-[9px] pr-[4px]">
        {sketchRelations.map((column, c) => (
          <div key={c} className={clsx('flex flex-col', c < 3 ? 'w-12' : 'w-[46px]')}>
            {column.map((n) => (
              <div key={n} className="flex h-[21px] items-center">
                <CheckBox label={n} checked={n !== 'parallelBlue'} />
                <Tool n={n} />
              </div>
            ))}
          </div>
        ))}
        <Divider />
        <Tools items={['bulb', 'origin', 'boxPick']} on={[1]} />
      </Group>
      <Group label="Dimension" className="pl-[2px] pr-[6px]">
        <button type="button" className="flex w-[63px] flex-col items-center text-[#444]">
          <svg viewBox="0 0 32 32" className="mt-[3px] size-8 shrink-0" fill="none">
            <path d="M1.5 3v26M30.5 3v26" stroke="#1b3f80" strokeWidth="1.5" />
            <path d="M2 13h28" stroke="#2767a8" strokeWidth="1.3" />
            <path d="m2 13 6-3v6zM30 13l-6-3v6z" fill="#2767a8" />
            <path d="M14 0h9l-4 8h5L11 23l3-10H9z" fill="#ffe24d" stroke="#a58a2a" />
          </svg>
          <span className="leading-[14px]">Smart</span>
          <span className="leading-[14px]">Dimension</span>
        </button>
        <Tools items={['dist', 'angle', 'coordDim']} carets={[2]} />
        <Tools items={['angCoord', 'symDia', 'chamfer']} />
        <Tools items={['dimEdit', 'dimPick', 'dimPaint']} />
        <Tools items={['attach', 'copyDim', 'arrange']} on={[2]} />
        <Tools items={['trackDim', 'alignDim', 'retrieve']} />
        <Divider />
        <Tools items={['styles', 'props']} />
      </Group>
      <Group label="Annotation" className="pl-[5px] pr-[4px]">
        <Tools items={['leader', 'balloon', 'rough']} />
        <Tools items={['datumTarget', 'surface', 'fcf']} />
        <Tools items={['datum', 'a1', 'weld']} />
        <Tools items={['connector', 'textA', 'taper']} carets={[1]} />
        <Tools items={['centreMark', 'boltCircle']} />
        <Divider className="mx-[3px]" />
        <Tools items={['addNode', 'treeNode']} on={[1]} />
      </Group>
      <Group label="Arrange" className="pl-[6px] pr-[5px]">
        <Tools items={['toFront', 'toBack']} />
        <Divider />
        <Tools items={['forward', 'backward']} />
      </Group>
      <Group label="Insert" className="px-[5px]">
        <Tools items={['textT', 'image', 'symbols']} />
        <Tools items={['globe', 'folder']} />
      </Group>
      <Group label="Blocks" className="px-[3px]">
        <BigTool
          label="Block"
          caret
          className="w-[46px]"
          icon={
            <svg viewBox="0 0 28 30" className="h-[30px] w-7" fill="none">
              <path d="M6.5 6.5h20v20h-20z" fill="#9fe0f8" stroke="#3a93c4" />
              <path d="M3.5 23.5h5v5h-5z" fill="#fff" stroke="#2767a8" />
              <path d="M8 1v14M1 8h14M3 3l10 10M13 3 3 13" stroke={red} strokeWidth="1.3" />
            </svg>
          }
        />
      </Group>
      <Group label="Window" className="px-[2px]">
        <button type="button" className="flex w-[70px] flex-col items-center text-[#444]">
          <svg viewBox="0 0 34 34" className="mt-px size-[34px] shrink-0" fill="#f2f2f2">
            <path d="M9.5 2.5h18v12h-18z" stroke="#888" />
            <path d="M9 2h19v3H9z" fill="#888" />
            <path d="M1.5 8.5h18v12h-18z" stroke="#999" />
            <path d="M1 8h19v3H1z" fill="#888" />
            <path d="M10.5 18.5h22v14h-22z" fill="#e4f1fd" stroke="#4b8bd0" />
            <path d="M10 18h23v4H10z" fill="#2b6cc0" />
          </svg>
          <span className="leading-[14px]">Switch</span>
          <span className="flex items-center gap-[2px] leading-[14px]">Windows <Caret /></span>
        </button>
      </Group>
    </div>
  )
}

function PaneButton({ n }: { n: string }) {
  return (
    <button type="button" aria-label={n} className="flex size-[22px] items-center justify-center border border-[#adadad] bg-[#e3e3e3]">
      <Glyph n={n} />
    </button>
  )
}

function Expander() {
  return (
    <span className="flex size-[9px] items-center justify-center border border-[#8f9aa8] bg-white">
      <span className="h-px w-[5px] bg-[#3c4e7a]" />
    </span>
  )
}

function LayersPane() {
  return (
    <aside className="mr-[5px] flex w-[224px] shrink-0 flex-col bg-white">
      <div className="flex h-[22px] items-center px-[7px] pb-1 text-[#2b579a]">
        <Glyph n="layersPane" />
        <span className="ml-[5px] flex-1">Layers</span>
        <div className="flex items-center gap-[7px] text-[#444]">
          <ShadeIcon className="h-[9px] w-[10px]" />
          <PinIcon className="h-[11px] w-[9px]" />
          <CrossIcon className="size-[9px]" />
        </div>
      </div>
      <div className="flex h-[28px] border-b border-[#ababab] bg-[#f7f7f7]">
        <button type="button" aria-label="Library" className="flex w-7 items-center justify-center border-r border-[#e0e0e0]"><Glyph n="library" /></button>
        <button type="button" aria-label="Groups" className="flex w-[29px] items-center justify-center"><Glyph n="groups" className="size-[18px]" /></button>
        <button type="button" aria-label="Layers" className="-mb-px flex w-[30px] items-center justify-center border-r border-t-2 border-r-[#c4c4c4] border-t-[#2f5577] bg-white"><Glyph n="layersPane" className="size-[17px]" /></button>
      </div>
      <div className="flex h-[34px] items-center gap-3 bg-[#f0f0f0] pl-px">
        <PaneButton n="newLayer" />
        <div className="flex gap-1">
          <PaneButton n="showLayer" />
          <PaneButton n="hideLayer" />
        </div>
        <PaneButton n="moveLayer" />
        <PaneButton n="delLayer" />
      </div>
      <ul className="flex-1 border-x border-t border-[#828790] pl-2 pt-[2px] leading-4 text-black">
        <li>
          <div className="flex h-4 items-center gap-[6px]"><Expander /><Glyph n="model" /><span>2D Model</span></div>
          <ul className="pl-[19px]">
            <li>
              <div className="flex h-4 items-center gap-[5px]"><Expander /><Glyph n="layerStack" /><span>Layers</span></div>
              <ul className="ml-[23px] border-l border-dotted border-[#999]">
                <li className="flex h-4 items-center"><span className="mr-[2px] w-2 border-t border-dotted border-[#999]" /><Glyph n="layerEdit" /><span className="ml-[3px] bg-[#0078d7] px-[2px] font-bold text-white">Default</span></li>
                <li className="flex h-4 items-center"><span className="mr-[2px] w-2 border-t border-dotted border-[#999]" /><Glyph n="layer" /><span className="ml-1">Auto - Hide</span></li>
              </ul>
            </li>
          </ul>
        </li>
      </ul>
    </aside>
  )
}

function DocTabs() {
  return (
    <div className="flex h-[31px] border-b-2 border-[#3b5078] bg-white pl-[2px] pt-[2px]">
      <div className="flex w-[105px] items-center bg-[#2b579a] pl-[17px] pr-1 text-white">
        <Glyph n="docIcon" />
        <a href="#draft12" className="ml-[3px] flex-1">Draft12</a>
        <button type="button" aria-label="Close Draft12"><CrossIcon className="size-[10px]" weight={2.2} /></button>
      </div>
      <div className="flex w-[110px] items-center pl-4 text-[#666]">
        <Glyph n="docIcon" />
        <a href="#obod" className="ml-1 flex-1">Обод.dft</a>
        <button type="button" aria-label="Close Обод.dft"><CrossIcon className="size-2" /></button>
      </div>
      <div className="flex w-[219px] items-center pl-[20px] text-[#666]">
        <Glyph n="docIcon" />
        <a href="#drive" className="ml-1 flex-1">Drive Roller Assembly Sam...</a>
        <button type="button" aria-label="Close Drive Roller Assembly"><CrossIcon className="size-2" /></button>
      </div>
      <div className="ml-auto flex items-center gap-2 pb-1 pr-[3px] text-[#666]">
        <svg viewBox="0 0 5 8" className="h-2 w-[5px]" fill="none"><path d="M4.5.5v7L.5 4z" stroke="currentColor" /></svg>
        <svg viewBox="0 0 5 8" className="h-2 w-[5px]" fill="none"><path d="M.5.5v7l4-3.5z" stroke="currentColor" /></svg>
        <svg viewBox="0 0 8 5" className="h-[5px] w-2" fill="currentColor"><path d="M0 0h8L4 5z" /></svg>
        <CrossIcon className="size-[10px]" weight={1.8} />
      </div>
    </div>
  )
}

function ArrowHead({ points }: { points: string }) {
  return <polygon points={points} fill="#fff" />
}

function Drawing() {
  return (
    <svg className="absolute inset-0 h-full w-full" fill="none" aria-label="Drawing sheet">
      <g transform="translate(-229 -168)">
        <g stroke="#fff" strokeWidth="2">
          <path d="M565 320 585 301H860" />
          <path d="M1000 441h105l19 18v104l-18 17H585l-20-17" />
          <circle cx="714.5" cy="371.5" r="13.5" strokeWidth="1.6" />
        </g>
        <g stroke="#fff" strokeWidth="1" shapeRendering="crispEdges">
          <path d="M480 301.5h105M480 580.5h105M495.5 302v278M565.5 563v92M1124.5 563v92M566 639.5h558M714.5 236v135M714 252.5h34" />
        </g>
        <path d="m640 252 16-15M671 236q6 10 13 0" stroke="#fff" />
        <ArrowHead points="495.5,302 489.5,335 501.5,335" />
        <ArrowHead points="495.5,580 489.5,548 501.5,548" />
        <ArrowHead points="566,639.5 599,634 599,645" />
        <ArrowHead points="1124,639.5 1091,634 1091,645" />
        <ArrowHead points="716,252.5 748,246 748,253" />
        <g stroke="#b9b9b9">
          <path d="M559 440.5h13M1118 511.5h13M1124.5 505v13M839 580.5h13M845.5 574v13" strokeWidth="1.5" />
          <path d="m566 309 5-3 4 4M579 314l-4 6-3-1M1105 451l4 4 3-2M1117 441l2 5-3 3M571 573l5-5 6 4M572 579l-2-4M1110 571l2-7 4-2M1112 569l8 7 3-3" />
        </g>
        <path d="M565 320v243" stroke="#e01218" strokeWidth="2" />
        <circle cx="640.5" cy="371.5" r="13.5" stroke="#e01218" strokeWidth="2" />
        <g stroke="#e81cf0" shapeRendering="crispEdges">
          <path d="M500 252.5h155M565.5 236v83M640.5 236v135" />
        </g>
        <polygon points="533,246 565,252 533,258" fill="#ff1cff" />
        <g stroke="#fff">
          <circle cx="533.5" cy="252.5" r="3" fill="#1e5a96" />
          <circle cx="656.5" cy="252.5" r="3" fill="#1e5a96" />
          <circle cx="565.5" cy="320.5" r="3" fill="#999" />
          <circle cx="640.5" cy="371.5" r="3" fill="#999" />
        </g>
        <g fontSize="44" textAnchor="middle" className="font-['Roboto_Condensed','Liberation_Sans_Narrow','Open_Sans_Condensed',Roboto,sans-serif] font-light">
          <text x="602" y="243" fill="#ff1cff">8</text>
          <text x="844" y="631" fill="#fff">60</text>
          <text x="487" y="441" fill="#fff" transform="rotate(-90 487 441)">30</text>
        </g>
        <circle cx="602" cy="221.5" r="3" fill="#8cc4f0" stroke="#fff" />
      </g>
    </svg>
  )
}

function BarButton({ n, tone = 'off' }: { n: string; tone?: 'off' | 'on' | 'lit' }) {
  return (
    <button
      type="button"
      aria-label={n}
      className={clsx(
        'flex h-7 w-[30px] shrink-0 items-center justify-center border',
        tone === 'off' && 'border-[#b5b5b5] bg-[#f1f1f1]',
        tone === 'on' && 'border-[#8295b5] bg-[#dfeaf7]',
        tone === 'lit' && 'border-[#9a8a6a] bg-linear-to-b from-[#fbd9a0] to-[#f9b95a]',
      )}
    >
      <Glyph n={n} className="size-[19px]" />
    </button>
  )
}

function Combo({ label, value, className, muted }: { label: string; value: string; className: string; muted?: boolean }) {
  return (
    <span className={clsx('relative flex h-[21px] shrink-0', className)}>
      <select aria-label={label} className={clsx('w-full appearance-none border pl-1 pr-5 leading-[19px] text-black', muted ? 'border-[#b5b5b5] bg-[#e1e1e1]' : 'border-[#7a7a7a] bg-white')}>
        <option>{value}</option>
      </select>
      <svg viewBox="0 0 10 6" fill="none" className="pointer-events-none absolute right-1 top-2 h-[6px] w-[10px]">
        <path d="m1 .5 4 4 4-4" stroke="#555" strokeWidth="1.3" />
      </svg>
    </span>
  )
}

function EmptyCombo({ label }: { label: string }) {
  return (
    <span className="relative flex h-[21px] w-[75px]">
      <select aria-label={label} disabled className="w-full appearance-none border border-[#c4c4c4] bg-white" />
      <span className="pointer-events-none absolute bottom-[3px] left-[3px] right-[19px] top-[3px] bg-[#f0f0f0]" />
      <svg viewBox="0 0 10 6" fill="none" className="pointer-events-none absolute right-1 top-2 h-[6px] w-[10px]">
        <path d="m1 .5 4 4 4-4" stroke="#aaa" strokeWidth="1.3" />
      </svg>
    </span>
  )
}

function CommandBar() {
  return (
    <div className="absolute left-[422px] right-0 top-0 flex h-[72px] overflow-hidden border-t-2 border-[#bcc8dc] bg-white pl-[2px] pt-[5px]">
      <button type="button" aria-label="Select" className="mt-[11px] flex h-9 w-[42px] shrink-0 items-center justify-center border border-[#a59a85] bg-linear-to-b from-[#fcc17c] via-[#fb9a35] to-[#fdb763]">
        <Cursor className="h-[27px] w-[18px]" />
      </button>
      <div className="ml-[5px] flex flex-col gap-1">
        <BarButton n="styleGrid" />
        <BarButton n="lockSmall" tone="lit" />
      </div>
      <div className="ml-[6px] flex w-[179px] shrink-0 flex-col gap-1">
        <div className="flex h-7 items-center"><Combo label="Dimension style" value="ESKD (mm)" className="w-full" /></div>
        <div className="flex h-7 items-center gap-[5px]">
          <Combo label="Round-off" value=".12" className="w-[78px]" muted />
          <BarButton n="decimals" tone="on" />
          <Combo label="Scale" value="1.00" className="w-[61px]" />
        </div>
      </div>
      <div className="ml-[7px] flex flex-col gap-1">
        <div className="flex h-7 items-center gap-[3px]">
          <BarButton n="crossDim" />
          <Combo label="Orientation" value="Horizontal/Vertical" className="w-[135px]" muted />
        </div>
        <div className="flex gap-[3px]">
          {['gDist', 'gAngle', 'gLeader', 'gCircle', 'gTarget'].map((n) => <BarButton key={n} n={n} />)}
        </div>
      </div>
      <div className="ml-2 grid shrink-0 grid-cols-3 content-start gap-x-[3px] gap-y-1">
        {['gNode', 'gArc', 'gArc2', 'gSym', 'gJog', 'gHalf'].map((n) => <BarButton key={n} n={n} />)}
      </div>
      <div className="ml-[6px] flex w-[42px] shrink-0 flex-col gap-1">
        <BarButton n="xGlyph" tone="on" />
        <div className="flex">
          <BarButton n="dlgEdit" tone="on" />
          <button type="button" aria-label="More" className="flex h-7 w-3 items-center justify-center border border-l-0 border-[#8295b5] bg-[#dfeaf7]"><Caret className="fill-black" /></button>
        </div>
      </div>
      <div className="ml-[3px] flex shrink-0 flex-col gap-1">
        <BarButton n="xRound" tone="on" />
        <BarButton n="dlgCheck" tone="lit" />
      </div>
      <div className="ml-1 flex w-[21px] shrink-0 flex-col gap-1 text-[14px] leading-7 text-[#999]">
        <span>+</span>
        <span>−</span>
      </div>
      <div className="flex shrink-0 flex-col gap-[9px] pt-[5px]">
        <EmptyCombo label="Upper tolerance" />
        <EmptyCombo label="Lower tolerance" />
      </div>
      <div className="ml-[10px] flex shrink-0 flex-col gap-1 text-[#999]">
        <label className="flex h-7 items-center justify-end gap-[2px]">Class:<input disabled className="h-5 w-10 border border-[#b5b5b5] bg-[#f0f0f0]" /></label>
        <label className="flex h-7 items-center justify-end gap-[2px]">Hole:<input disabled className="h-5 w-10 bg-[#c0c0c0]" /></label>
      </div>
    </div>
  )
}

function ValueBox() {
  return (
    <div className="absolute left-[318px] top-[86px] w-[120px] border border-[#c6d6e8] bg-[#d9e5f2]">
      <div className="flex h-[9px] items-center justify-center bg-white">
        <span className="w-[38px] border-t-2 border-dotted border-[#333]" />
      </div>
      <div className="flex items-center gap-1 py-1 pl-[3px]">
        <div className="flex h-[21px] w-[90px] items-center border border-[#2a7fc9] bg-white pl-1">
          <input readOnly aria-label="Dimension value" value="8.000 mm" className="h-[15px] w-[52px] bg-[#1a6fc4] font-['Liberation_Sans',sans-serif] leading-[15px] text-white outline-none" />
        </div>
        <button type="button" aria-label="Lock value" className="flex size-[21px] items-center justify-center border border-[#a9a9a9] bg-[#eee]"><Glyph n="lockSmall" /></button>
      </div>
    </div>
  )
}

function MenuCheck() {
  return (
    <span className="flex h-[20px] w-5 items-center justify-center bg-[#c3d4ec]">
      <svg viewBox="0 0 10 9" className="h-[9px] w-[10px]" fill="none"><path d="m1 4.5 3 3L9 1" stroke="#2b3a55" strokeWidth="2" /></svg>
    </span>
  )
}

function ContextMenu() {
  const item = 'flex h-[22px] w-full items-center text-left'
  return (
    <div role="menu" className="absolute left-[425px] top-[84px] w-[183px] border border-[#c9d3e0] bg-white p-px text-[12px] text-[#555] shadow-[3px_3px_3px_rgba(0,0,0,0.5)]">
      <button type="button" role="menuitem" className={clsx(item, 'bg-[#d8e2f1] pl-[33px] pr-[9px]')}>
        <span className="flex-1">Terminator Type</span>
        <svg viewBox="0 0 5 8" className="h-2 w-[5px] fill-[#444]"><path d="M0 0v8l5-4z" /></svg>
      </button>
      <div className="my-px ml-[33px] h-px bg-[#d5dbe3]" />
      <button type="button" role="menuitem" className={clsx(item, 'gap-[11px] pl-[2px]')}><MenuCheck />Show Projection Line</button>
      <button type="button" role="menuitem" className={clsx(item, 'gap-[11px] pl-[2px]')}><MenuCheck />Show Dimension Line</button>
      <div className="my-px ml-[33px] h-px bg-[#d5dbe3]" />
      <button type="button" role="menuitem" className={clsx(item, 'pl-[33px]')}>Flip Terminator</button>
    </div>
  )
}

const terminators: { label: string; art: ReactNode }[] = [
  { label: 'Arrow (Filled)', art: <path d="M0 6 10 3v6zM10 6h6" fill="#0f5a8a" /> },
  { label: 'Arrow (Hollow)', art: <path d="M0 6 9 3v6zM0 6h16" /> },
  { label: 'Arrow (Open)', art: <path d="M9 2.5 1 6l8 3.5M1 6h15" /> },
  { label: 'Backslash', art: <path d="m1 1 5 10M4 6h11" /> },
  { label: 'Blank', art: <path d="M4 6h11" /> },
  { label: 'Circle', art: <><circle cx="4.5" cy="6" r="3" /><path d="M4 6h11" /></> },
  { label: 'Dot', art: <><circle cx="4.5" cy="6" r="3.2" fill="#0f5a8a" /><path d="M4 6h11" /></> },
  { label: 'Double Arrow (Filled)', art: <path d="M0 6 9 3v6zM7 6l8-3v6z" fill="#0f5a8a" /> },
  { label: 'Double Arrow (Hollow)', art: <path d="M0 6 9 3v6zM7 6l8-3v6zM0 6h16" /> },
  { label: 'Double Arrow (Open)', art: <path d="M9 3 1 6l8 3M15 2 6 6l9 4M1 6h15" /> },
  { label: 'Slash', art: <path d="M6 1 1 11M4 6h11" /> },
]

function TerminatorMenu() {
  return (
    <div role="menu" className="absolute left-[607px] top-[86px] w-[191px] border border-[#c9c9c9] bg-white p-px text-[12px] text-[#555] shadow-[3px_3px_3px_rgba(0,0,0,0.5)]">
      {terminators.map(({ label, art }) => (
        <button key={label} type="button" role="menuitem" className="flex h-[22px] w-full items-center gap-[13px] pl-1 text-left">
          <svg viewBox="0 0 16 12" className="h-3 w-4" fill="none" stroke="#1d6496" strokeWidth="1.2">{art}</svg>
          <span>{label}</span>
        </button>
      ))}
    </div>
  )
}

function SideDock() {
  return (
    <aside className="flex w-[29px] shrink-0 flex-col items-center bg-[#f4f5f7]">
      <button type="button" aria-label="Help" className="ml-1 mt-[9px] size-4 rounded-full bg-[#2a5ba8] text-[12px] font-bold leading-4 text-white shadow-[0_0_0_1px_#17386e]">?</button>
      <button type="button" aria-label="Standard parts" className="ml-1 mt-[85px] h-[17px]">
        <svg viewBox="0 0 20 17" className="h-[17px] w-5" fill="none">
          <path d="M.7.7h18.6v15.6H.7z" fill="#eef6fd" stroke="#2b5797" strokeWidth="1.4" />
          <text x="2.5" y="9.5" fontSize="9" fontWeight="700" fill="#c87a1c">S</text>
          <path d="M9 5h8M9 8h8M3 11h14M3 13.5h14" stroke="#2f72b8" strokeDasharray="4 1" />
        </svg>
      </button>
      <button type="button" className="ml-1 mt-[15px] flex flex-col items-center gap-[3px] text-[12px] text-[#2b579a]">
        <svg viewBox="0 0 15 20" className="h-5 w-[15px]" fill="none">
          <path d="M.7 2.7h13.6v16.6H.7z" fill="#fff" stroke="#1f5f9f" strokeWidth="1.4" />
          <path d="M3.5 1h8v4h-8z" fill="#d9952c" />
          <path d="M3 8h2M3 11h2M7 8h5M7 11h5M7 14h5" stroke="#1f5f9f" />
          <path d="m3 14 2.5 3L12 10" stroke="#2c9a3a" strokeWidth="2" />
        </svg>
        <span className="[writing-mode:vertical-rl]">Requirements</span>
      </button>
    </aside>
  )
}

const navArrows = ['M3 1v8M9 1v8L4 5z', 'M8 1v8L3 5z', 'M3 1v8l5-4z', 'M3 1v8l5-4zM9 1v8']

function SheetTab({ className, shape, fill, children }: { className: string; shape: string; fill: string; children: ReactNode }) {
  return (
    <button type="button" className={clsx('relative flex h-[16px] items-center justify-center', className)}>
      <svg viewBox="0 0 100 16" preserveAspectRatio="none" className="absolute inset-0 h-full w-full">
        <polygon points={shape} fill={fill} stroke="#111" vectorEffect="non-scaling-stroke" />
      </svg>
      <span className="relative">{children}</span>
    </button>
  )
}

function SheetTabs() {
  return (
    <div className="flex h-[17px] border-t border-[#8a8a8a] bg-[#c0c0c0]">
      {navArrows.map((d) => (
        <button key={d} type="button" aria-label="Scroll sheets" className="flex size-4 items-center justify-center border border-b-[#888] border-l-white border-r-[#888] border-t-white bg-[#ececec]">
          <svg viewBox="0 0 11 10" className="h-[10px] w-[11px]" fill="#999" stroke="#999"><path d={d} /></svg>
        </button>
      ))}
      <SheetTab className="z-10 w-[80px] text-[12px] font-bold text-white" shape="0,0 100,0 90,15.5 10,15.5" fill="#404040">2D Model</SheetTab>
      <SheetTab className="-ml-1 w-[61px] text-black" shape="7,.5 100,.5 86,15.5 7,15.5 0,8" fill="#fdd5b1">Sheet1</SheetTab>
      <SheetTab className="-ml-1 w-[39px]" shape="8,.5 100,.5 85,15.5 8,15.5 0,8" fill="#fdd5b1">
        <svg viewBox="0 0 15 12" className="h-3 w-[15px]" fill="none">
          <path d="M2.7 1.7h11.6v9.6H2.7z" fill="#fff" stroke="#2b2bb0" strokeWidth="1.3" />
          <path d="M6 5h6v4H6z" stroke="#2b2bb0" />
          <path d="M4 0v7M0 3.5h7M1 1l5 5M6 1 1 6" stroke={red} />
        </svg>
      </SheetTab>
      <div className="flex-1 border-t border-black" />
    </div>
  )
}

function PromptBar() {
  return (
    <div className="flex h-[25px] items-center bg-white">
      <svg viewBox="0 0 20 9" className="ml-[5px] h-[9px] w-5" fill="none">
        <path d="M.5.5h19v8H.5z" fill="#d5e6f6" stroke="#2b5797" />
        <path d="M0 0h20v2.5H0z" fill="#4a86c6" />
        <path d="M2 5.5h10M14 5.5h4" stroke="#2b5797" strokeWidth="2" strokeDasharray="2 1" />
      </svg>
      <span className="ml-[5px] w-[66px] pt-[2px] text-[#2b579a]">PromptBar</span>
      <p className="mt-[3px] h-[21px] flex-1 overflow-hidden whitespace-pre border-l border-t border-[#a0a0a0] pl-px font-['DejaVu_Sans_Condensed','Open_Sans',sans-serif] text-[13px] leading-[18px] text-[#111]">
        {'Alt+drag connect handles to change parent geometry.  Alt+drag the dimension line to change its alignment in the group.  Alt+drag dimension text to pull text'}
      </p>
      <div className="flex h-[21px] w-[15px] flex-col items-center justify-around bg-[#f0f0f0]">
        <svg viewBox="0 0 8 5" className="h-[5px] w-2" fill="none"><path d="m.5 4.5 3.5-4 3.5 4" stroke="#555" strokeWidth="1.4" /></svg>
        <svg viewBox="0 0 8 5" className="h-[5px] w-2" fill="none"><path d="m.5.5 3.5 4 3.5-4" stroke="#555" strokeWidth="1.4" /></svg>
      </div>
      <div className="flex items-center gap-[5px] pl-2 pr-1 text-black">
        <button type="button" aria-label="Larger text" className="flex font-['Liberation_Serif',serif] text-[17px] font-bold leading-4">
          A<Caret className="rotate-180 fill-black" />
        </button>
        <button type="button" aria-label="Smaller text" className="flex pt-1 font-['Liberation_Serif',serif] text-[12px] font-bold leading-4">
          A<Caret className="fill-black" />
        </button>
        <svg viewBox="0 0 8 9" className="h-[9px] w-2" fill="none"><path d="m.5 4.5 3.5-4 3.5 4M.5 8.5l3.5-4 3.5 4" stroke="currentColor" /></svg>
        <ShadeIcon className="h-2 w-[10px]" />
        <PinIcon className="ml-[2px] h-[11px] w-[9px]" />
        <CrossIcon className="ml-[2px] size-[9px]" />
      </div>
    </div>
  )
}

const viewTools: { label: string; art: ReactNode }[] = [
  { label: 'Zoom area', art: <><path d="M1 2h14v12H1z" fill="#dbe9f7" stroke="#8db6e0" /><path d="M3 4h3M3 4v3M13 4h-3M13 4v3M3 12V9M3 12h3" stroke="#234" /><circle cx="8.5" cy="8" r="3.5" fill="#fff" stroke="#2f72b8" /><path d="m11 11 4 4" stroke="#b06a2c" strokeWidth="2" /></> },
  { label: 'Zoom', art: <><circle cx="6.5" cy="6.5" r="5.5" fill="#d3e5f7" stroke="#7ea9d6" /><path d="M6.5 4v4M4.5 5.5h4M4.5 9.5h4" stroke="#234" /><path d="m10.5 10.5 5 5" stroke="#b97a4a" strokeWidth="2.3" /></> },
  { label: 'Pan to', art: <><path d="M9 0 1 7h5l-3 6 9-8H8l4-5z" fill="#ffe95a" stroke="#e6eef7" strokeWidth=".8" /><circle cx="10.5" cy="8" r="3" fill="#e8f2fb" stroke="#9bb" /><path d="m12 11 3 4" stroke="#b97a4a" strokeWidth="2" /></> },
  { label: 'Fit', art: <><path d="M1 2h14v12H1z" fill="#e9f2fb" stroke="#8db6e0" /><path d="m4 5 8 7M12 5l-8 7M4 5h2M4 5v2M12 5h-2M12 5v2M4 12v-2M4 12h2M12 12h-2M12 12v-2" stroke="#2b5797" strokeWidth="1.3" /></> },
  { label: 'Pan', art: <><path d="M1 2h13v10H1z" fill="#dbe9f7" stroke="#8db6e0" /><path d="m3 8 3-4 7 1 2 5-2 5-5-1z" fill="#c9a37a" stroke="#7d5f3c" /><path d="m5 6 4 5M8 5l4 5" stroke="#7d5f3c" /></> },
]

function StatusBar() {
  return (
    <footer className="flex h-5 shrink-0 items-center justify-end bg-[#2b579a] pr-1">
      <input aria-label="Find a command" placeholder="Find a command" className="mt-[2px] h-[18px] w-[140px] bg-white pb-[2px] pl-[3px] text-[12px] placeholder:text-[#b9b9b9]" />
      <button type="button" aria-label="Go" className="ml-1">
        <svg viewBox="0 0 14 10" className="h-[10px] w-[14px]" fill="#fff"><path d="M0 10q0-7 8-7V0l6 4.5L8 9V6Q3 6 0 10z" /></svg>
      </button>
      <div className="ml-2 flex gap-[6px]">
        {viewTools.map(({ label, art }) => (
          <button key={label} type="button" aria-label={label}>
            <svg viewBox="0 0 16 16" className="size-4" fill="none">{art}</svg>
          </button>
        ))}
      </div>
      <button type="button" aria-label="Zoom out" className="ml-2 flex size-[14px] items-center justify-center rounded-full bg-[#eee]"><span className="h-[2px] w-2 bg-[#333]" /></button>
      <input
        type="range"
        aria-label="Zoom level"
        defaultValue="71"
        className="ml-[3px] h-4 w-[114px] appearance-none bg-transparent [&::-webkit-slider-runnable-track]:h-px [&::-webkit-slider-runnable-track]:bg-[#d9e4f3] [&::-webkit-slider-thumb]:-mt-[6px] [&::-webkit-slider-thumb]:h-[13px] [&::-webkit-slider-thumb]:w-[10px] [&::-webkit-slider-thumb]:appearance-none [&::-webkit-slider-thumb]:rounded-b-[5px] [&::-webkit-slider-thumb]:border-2 [&::-webkit-slider-thumb]:border-[#e4ecf6] [&::-webkit-slider-thumb]:bg-[#5c86bd]"
      />
      <button type="button" aria-label="Zoom in" className="ml-[2px]">
        <svg viewBox="0 0 14 14" className="size-[14px]"><circle cx="7" cy="7" r="7" fill="#eee" /><path d="M3 6h8v2H3zM6 3h2v8H6z" fill="#333" /></svg>
      </button>
      <span className="ml-[9px] size-[13px] rounded-full border border-[#f0b0a8] bg-[#cc1414]" />
      <svg viewBox="0 0 14 14" className="ml-[11px] size-[14px]"><path d="m7 0 7 7h-3v4H3V7H0z" fill="#35c21e" stroke="#1b8a0e" strokeWidth=".5" /><path d="M2 13h10" stroke="#fff" strokeWidth="1.5" /></svg>
    </footer>
  )
}

function TaskButton({ label, state, children }: { label: string; state?: 'open' | 'active'; children: ReactNode }) {
  return (
    <button
      type="button"
      aria-label={label}
      className={clsx(
        'flex h-10 w-[49px] items-center justify-center',
        state === 'active' && 'border-b-2 border-[#76b9ed] bg-[#333]',
        state === 'open' && 'bg-[linear-gradient(#76b9ed,#76b9ed)] bg-[length:40px_2px] bg-bottom bg-no-repeat',
      )}
    >
      {children}
    </button>
  )
}

function Taskbar() {
  return (
    <footer className="flex h-10 shrink-0 items-center bg-[#020308] text-white">
      <TaskButton label="Start">
        <svg viewBox="0 0 16 16" className="size-4" fill="#fff"><path d="M0 2.3 6.5 1.4v6.1H0zM7.5 1.2 16 0v7.5H7.5zM0 8.5h6.5v6.1L0 13.7zM7.5 8.5H16V16l-8.5-1.2z" /></svg>
      </TaskButton>
      <TaskButton label="Task view">
        <svg viewBox="0 0 20 14" className="h-[14px] w-5" fill="none" stroke="#fff"><path d="M4.5.5h11v13h-11zM2.5 2.5h-2v9h2M17.5 2.5h2v9h-2" /></svg>
      </TaskButton>
      <TaskButton label="Edge">
        <svg viewBox="0 0 20 21" className="h-[21px] w-5" fill="#0f7ad6">
          <path d="M0 9.5C1 3.5 5 0 10.5 0 16.5 0 20 4 20 9.5V12H6.5c0 3.5 2.5 5 6 5 2.3 0 4.5-.7 6-1.7v4.2c-1.7 1-4.5 1.5-7 1.500C6 21 2.500 18 2.500 13.500c0-3.500 2-6.300 5-7.500-1 1-1.200 2-1.300 3h7.600c0-2.700-1.300-4.500-4.300-4.500C5.500 4.500 2 6.500 0 9.500z" />
        </svg>
      </TaskButton>
      <TaskButton label="Internet Explorer" state="open">
        <svg viewBox="0 0 24 22" className="h-[22px] w-6" fill="none">
          <path d="M18 15a7 7 0 1 1 1-4H7" stroke="#55c8f5" strokeWidth="4" />
          <path d="M3 20C-2 17 14-1 22 1c1 1 1 3 0 5" stroke="#f2c53a" strokeWidth="2" />
          <path d="M3 20c3 1 6 0 8-2" stroke="#f2c53a" strokeWidth="1.5" />
        </svg>
      </TaskButton>
      <TaskButton label="File Explorer">
        <svg viewBox="0 0 22 18" className="h-[18px] w-[22px]"><path d="M0 0h8l2 2h12v15H0z" fill="#f3cf70" /><path d="M0 5h22v12H0z" fill="#ffe599" /><path d="M4 10h14v8h-4v-4H8v4H4z" fill="#43b0dc" /></svg>
      </TaskButton>
      <TaskButton label="Store">
        <svg viewBox="0 0 23 22" className="h-[22px] w-[23px]"><path d="M7 6V4q0-3.5 4.5-3.5T16 4v2" fill="none" stroke="#fff" strokeWidth="1.3" /><path d="M0 6h23v16H0z" fill="#fff" /><path d="M6 9h5v5H6z" fill="#e8502c" /><path d="M12 9h5v5h-5z" fill="#6eac1c" /><path d="M6 15h5v5H6z" fill="#1c98dc" /><path d="M12 15h5v5h-5z" fill="#f5b81c" /></svg>
      </TaskButton>
      <TaskButton label="Mail">
        <svg viewBox="0 0 24 19" className="h-[19px] w-6"><path d="M0 6 12 0l12 6v13H0z" fill="#fff" /><path d="M1 6h22l-10 5 7 4L3 8z" fill="#020308" /></svg>
      </TaskButton>
      <TaskButton label="Solid Edge" state="active"><Star className="size-[25px]" /></TaskButton>
      <div className="ml-auto flex h-full items-center">
        <svg viewBox="0 0 16 16" className="size-4" fill="none" stroke="#fff" strokeWidth="1.2"><circle cx="11" cy="3.5" r="2.5" /><circle cx="5" cy="8" r="2.5" /><path d="M.7 15q0-4.5 4.3-4.5T9 15M8 7.5Q12 4 15 10" /></svg>
        <svg viewBox="0 0 12 7" className="ml-[22px] h-[7px] w-3" fill="none"><path d="m.5 6.5 5.5-5.5 5.5 5.5" stroke="#fff" strokeWidth="1.3" /></svg>
        <svg viewBox="0 0 15 10" className="ml-[11px] h-[10px] w-[15px]" fill="none"><path d="M.5.5h12v9H.5zM13 3h1.5v4H13" stroke="#fff" /><path d="M2 2h5v6H2z" fill="#fff" /></svg>
        <svg viewBox="0 0 17 14" className="ml-2 h-[14px] w-[17px]" fill="none" stroke="#fff"><path d="M3.5 2.5h13v8h-13zM10 11v2M6 13.5h8M.5.5h4v4h-4z" fill="#020308" /></svg>
        <svg viewBox="0 0 16 14" className="ml-2 h-[14px] w-4" fill="none" stroke="#fff"><path d="M.5 4.5h3l4-4v13l-4-4h-3zM9.5 5q1.5 2 0 4" /><path d="M11.5 3q3 4 0 8M13.5 1q5 6 0 12" stroke="#888" /></svg>
        <span className="ml-[10px]">ENG</span>
        <div className="ml-3 text-center leading-[18px]">11:10 PM<br />9/28/18</div>
        <svg viewBox="0 0 16 16" className="ml-[19px] size-4" fill="none"><path d="M.5 1.5h15v11h-4l-3 3v-3h-8z" stroke="#fff" strokeWidth="1.2" /></svg>
        <span className="ml-5 mr-1 h-full w-px bg-[#444]" />
      </div>
    </footer>
  )
}

export default function App() {
  return (
    <div className="flex h-screen flex-col overflow-hidden bg-white font-['Open_Sans','Noto_Sans',sans-serif] text-[11px] leading-4">
      <TitleBar />
      <Ribbon />
      <div className="flex min-h-0 flex-1">
        <LayersPane />
        <div className="relative flex min-w-0 flex-1">
          <main className="flex min-w-0 flex-1 flex-col">
            <DocTabs />
            <div className="relative min-h-0 flex-1 bg-[#404040]">
              <Drawing />
              <ValueBox />
              <ContextMenu />
              <TerminatorMenu />
            </div>
            <SheetTabs />
            <PromptBar />
          </main>
          <SideDock />
          {/* floats over both the sheet and the side dock */}
          <div className="absolute inset-x-0 top-[31px]">
            <CommandBar />
          </div>
        </div>
      </div>
      <StatusBar />
      <Taskbar />
    </div>
  )
}
